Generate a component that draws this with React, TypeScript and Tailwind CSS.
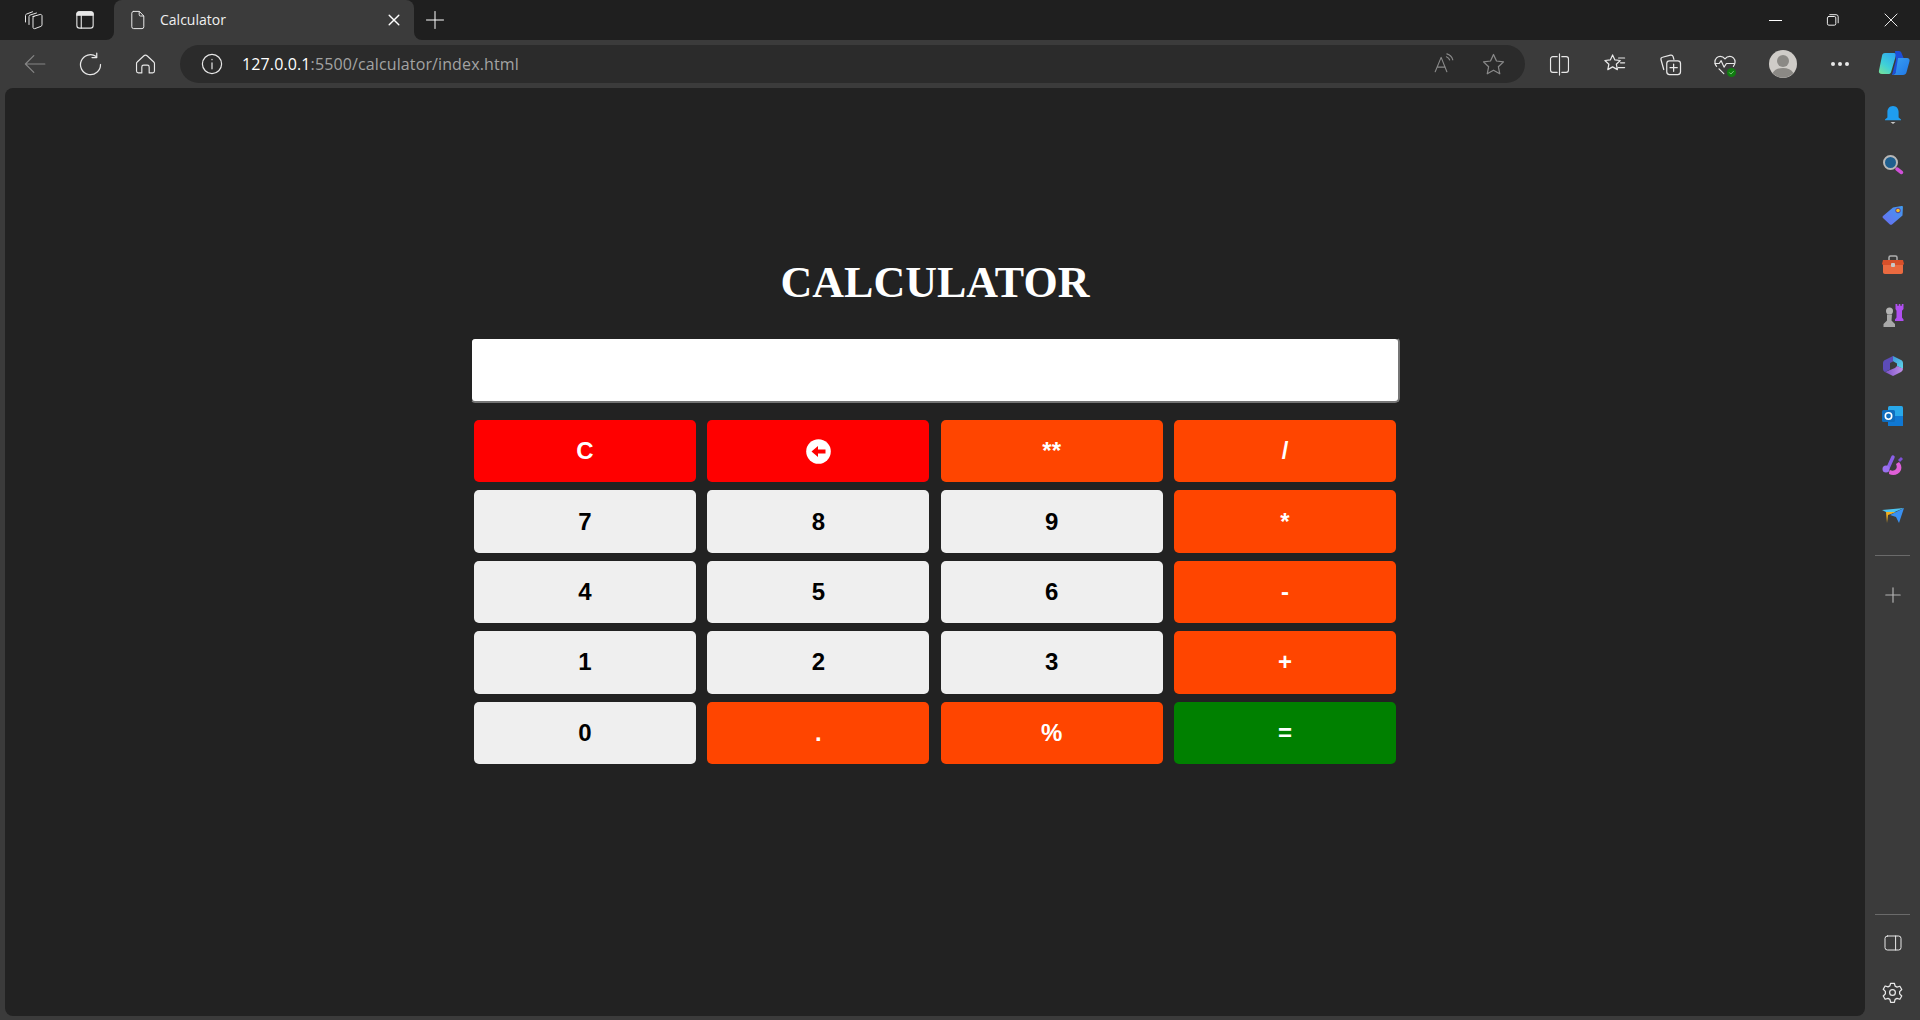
import { ReactNode } from "react";

const BUTTONS = [
  { label: "C", tone: "bg-[#ff0000] text-white" },
  { label: "back", tone: "bg-[#ff0000] text-white" },
  { label: "**", tone: "bg-[#ff4500] text-white" },
  { label: "/", tone: "bg-[#ff4500] text-white" },
  { label: "7", tone: "bg-[#efefef] text-black" },
  { label: "8", tone: "bg-[#efefef] text-black" },
  { label: "9", tone: "bg-[#efefef] text-black" },
  { label: "*", tone: "bg-[#ff4500] text-white" },
  { label: "4", tone: "bg-[#efefef] text-black" },
  { label: "5", tone: "bg-[#efefef] text-black" },
  { label: "6", tone: "bg-[#efefef] text-black" },
  { label: "-", tone: "bg-[#ff4500] text-white" },
  { label: "1", tone: "bg-[#efefef] text-black" },
  { label: "2", tone: "bg-[#efefef] text-black" },
  { label: "3", tone: "bg-[#efefef] text-black" },
  { label: "+", tone: "bg-[#ff4500] text-white" },
  { label: "0", tone: "bg-[#efefef] text-black" },
  { label: ".", tone: "bg-[#ff4500] text-white" },
  { label: "%", tone: "bg-[#ff4500] text-white" },
  { label: "=", tone: "bg-[#008000] text-white" },
];

function Icon({
  size = 20,
  className = "text-[#e8e8e8]",
  children,
}: {
  size?: number;
  className?: string;
  children: ReactNode;
}) {
  return (
    <svg
      width={size}
      height={size}
      viewBox="0 0 20 20"
      fill="none"
      stroke="currentColor"
      strokeWidth={1}
      strokeLinecap="round"
      strokeLinejoin="round"
      className={className}
    >
      {children}
    </svg>
  );
}

function ToolSlot({
  width = "w-[55px]",
  children,
}: {
  width?: string;
  children: ReactNode;
}) {
  return (
    <div className={`flex h-full shrink-0 items-center justify-center ${width}`}>
      {children}
    </div>
  );
}

function SideSlot({ children }: { children: ReactNode }) {
  return (
    <div className="flex h-[50.1px] w-full shrink-0 items-center justify-center">
      {children}
    </div>
  );
}

function TitleBar() {
  return (
    <div className="flex h-10 shrink-0 bg-[#3b3b3b]">
      <div className="flex w-[114px] shrink-0 items-center rounded-br-lg bg-[#1f1f1f] pl-[23px]">
        <Icon size={20}>
          <path d="M10 6.500l7-2c1-.3 2 .3 2 1.300v9c0 .8-.4 1.300-1.100 1.600l-6 2.200c-1 .3-1.900-.2-1.900-1.200V8c0-.7.3-1.200 1-1.500Z" />
          <path d="M6 14.500V6.500c0-.7.4-1.200 1-1.400l6.500-2.100" />
          <path d="M2.500 12V5.500c0-.7.4-1.200 1-1.400l6-2.300" />
        </Icon>
        <div className="ml-[31px]">
          <Icon size={22}>
            <rect x="2.600" y="2.600" width="14.800" height="14.800" rx="2.400" />
            <path d="M2.600 5.600h14.800v-1a2 2 0 0 0-2-2H4.600a2 2 0 0 0-2 2Z" fill="currentColor" />
            <path d="M6.600 6v11.400" />
          </Icon>
        </div>
      </div>
      <div className="w-[300px] shrink-0 bg-[#1f1f1f]">
        <div className="flex h-full items-center rounded-t-lg bg-[#3b3b3b] pl-[14px] pr-[12px]">
          <Icon size={20}>
            <path d="M5.600 1.400h5.800l4.400 4.600v10.800a1.800 1.800 0 0 1-1.800 1.800H5.600a1.800 1.800 0 0 1-1.800-1.800V3.200a1.800 1.800 0 0 1 1.800-1.800Z" />
            <path d="M11.200 1.600v3.200a1.200 1.200 0 0 0 1.200 1.200h3.200" />
          </Icon>
          <span className="ml-[12px] flex-1 pb-[2px] font-['Open_Sans',sans-serif] text-[14px] text-[#f0f0f0]">
            Calculator
          </span>
          <Icon size={16} className="text-white">
            <path d="M4 4l12 12M16 4 4 16" strokeWidth={1.800} />
          </Icon>
        </div>
      </div>
      <div className="flex flex-1 items-center rounded-bl-lg bg-[#1f1f1f] pl-[11px]">
        <Icon size={20} className="text-white">
          <path d="M10 1.500v17M1.500 10h17" />
        </Icon>
        <div className="ml-auto flex h-full items-center">
          <div className="flex w-[57px] justify-center">
            <div className="h-px w-[13px] bg-white" />
          </div>
          <div className="flex w-[58px] justify-center">
            <Icon size={14} className="text-white">
              <rect x="2" y="5" width="12" height="12.400" rx="2" strokeWidth={1.300} />
              <path d="M5.400 2.400h9a3 3 0 0 1 3 3v8.600" strokeWidth={1.300} />
            </Icon>
          </div>
          <div className="flex w-[58px] justify-center">
            <Icon size={14} className="text-white">
              <path d="M1.400 1.400l17.200 17.200M18.600 1.400 1.400 18.600" strokeWidth={1.300} />
            </Icon>
          </div>
        </div>
      </div>
    </div>
  );
}

function Toolbar() {
  return (
    <div className="flex h-12 shrink-0 items-center bg-[#3b3b3b] pl-[7px]">
      <ToolSlot width="w-[56px]">
        <Icon size={24} className="text-[#858585]">
          <path d="M18.200 10H2.200M9 3 2 10l7 7" />
        </Icon>
      </ToolSlot>
      <ToolSlot>
        <Icon size={25}>
          <path d="M14.600 3.600A8 8 0 1 0 18 10" />
          <path d="M15 .8v3.600h-3.800" />
        </Icon>
      </ToolSlot>
      <ToolSlot>
        <Icon size={23}>
          <path d="M8.400 2.600a2.300 2.300 0 0 1 3.200 0l5.600 5.200c.4.4.6.8.6 1.300v6.600c0 .9-.7 1.600-1.600 1.600h-3v-5.100a1.600 1.600 0 0 0-1.600-1.600H8.400a1.600 1.600 0 0 0-1.600 1.600v5.100h-3c-.9 0-1.600-.7-1.600-1.600V9.100c0-.5.2-1 .6-1.300Z" />
        </Icon>
      </ToolSlot>
      <div className="ml-[7px] flex h-[38px] min-w-0 flex-1 items-center rounded-full bg-[#2b2b2b] pl-[20px] pr-[19px]">
        <Icon size={24}>
          <circle cx="10" cy="10" r="8" />
          <path d="M10 9v5M10 6.200v.2" />
        </Icon>
        <div className="ml-[18px] font-['Open_Sans',sans-serif] text-[16px] tracking-[0.12px] text-[#a3a3a3]">
          <span className="text-white">127.0.0.1</span>:5500/calculator/index.html
        </div>
        <div className="ml-auto flex items-center gap-[26px]">
          <Icon size={22} className="text-[#8a8a8a]">
            <path d="M2 17 7.400 4 12.600 17M3.800 12.800h7.400" />
            <path d="M12.200 3.400a5 5 0 0 1 3 3M12.600.8a8 8 0 0 1 5.400 5.400" />
          </Icon>
          <Icon size={25} className="text-[#8a8a8a]">
            <path d="m10 2 2.400 5.200 5.600.7-4.100 3.900 1.100 5.600-5-2.800-5 2.800 1.100-5.600L2 7.900l5.600-.7Z" />
          </Icon>
        </div>
      </div>
      <div className="ml-[7px] flex h-full shrink-0 items-center">
        <ToolSlot>
          <Icon size={23}>
            <path d="M8 3.200H4.200a2 2 0 0 0-2 2v9.600a2 2 0 0 0 2 2H8M12 3.200h3.800a2 2 0 0 1 2 2v9.600a2 2 0 0 1-2 2H12M10 .8v18.400" />
          </Icon>
        </ToolSlot>
        <ToolSlot width="w-[56px]">
          <Icon size={24}>
            <path d="m8 2.400 1.900 4.200 4.500.5-3.300 3.100.9 4.500-4-2.300-4 2.300.9-4.500L1.600 7.100l4.500-.5Z" />
            <path d="M13 5h5M14.600 9h3.400M12.600 13h5.400" />
          </Icon>
        </ToolSlot>
        <ToolSlot width="w-[54px]">
          <Icon size={25}>
            <rect x="7" y="7" width="11" height="11" rx="2.200" />
            <path d="M12.500 9.600v5.800M9.600 12.500h5.800" />
            <path d="M4.600 14 2.400 6.200c-.2-1 .3-1.800 1.200-2l6.400-1.700c1-.2 1.800.2 2.100 1.200l.6 2.200" />
          </Icon>
        </ToolSlot>
        <ToolSlot width="w-[56px]">
          <div className="relative">
            <Icon size={24}>
              <path d="M3 12a5.400 5.400 0 0 1-1.400-3.600C1.600 5.600 3.800 3.600 6 3.600c1.600 0 3 .8 4 2.200 1-1.400 2.400-2.200 4-2.200 2.200 0 4.400 2 4.400 4.800 0 1.300-.5 2.500-1.400 3.600" />
              <path d="M1.600 9.600h3.600l1.600-2.400 2.400 5.400 2-3h6.600M5 14l4 4" />
            </Icon>
            <div className="absolute bottom-[-1px] right-[1px] flex h-[9px] w-[9px] items-center justify-center rounded-full bg-[#107c10]">
              <svg width="7" height="7" viewBox="0 0 8 8" fill="none" stroke="#8fcf8f" strokeWidth="1">
                <path d="m1.500 4 1.800 1.800 3.200-3.400" />
              </svg>
            </div>
          </div>
        </ToolSlot>
        <ToolSlot width="w-[60px]">
          <svg width="28" height="28" viewBox="0 0 28 28">
            <circle cx="14" cy="14" r="14" fill="#cfccc8" />
            <circle cx="14" cy="11" r="6" fill="#8b8985" />
            <path d="M3.600 23c2-3.400 5.600-5 10.400-5s8.400 1.600 10.400 5a14 14 0 0 1-20.800 0Z" fill="#8b8985" />
          </svg>
        </ToolSlot>
        <ToolSlot width="w-[54px]">
          <div className="flex gap-[3px]">
            <div className="h-[4px] w-[4px] rounded-full bg-[#e8e8e8]" />
            <div className="h-[4px] w-[4px] rounded-full bg-[#e8e8e8]" />
            <div className="h-[4px] w-[4px] rounded-full bg-[#e8e8e8]" />
          </div>
        </ToolSlot>
        <ToolSlot width="w-[53px]">
          <svg width="32" height="28" viewBox="0 0 32 28">
            <defs>
              <linearGradient id="cpa" x1="0.800" y1="0" x2="0.200" y2="1">
                <stop offset="0" stopColor="#2fa8f0" />
                <stop offset="0.600" stopColor="#3fd0d8" />
                <stop offset="1" stopColor="#70e0a0" />
              </linearGradient>
              <linearGradient id="cpb" x1="0" y1="0" x2="1" y2="1">
                <stop offset="0" stopColor="#3aa0f0" />
                <stop offset="1" stopColor="#2078e8" />
              </linearGradient>
            </defs>
            <path d="M7 3h9c1.500 0 2.400.8 2 2.200l-5 17c-.4 1.200-1.200 1.800-2.600 1.800H4c-2.400 0-3.600-1.500-3-3.500L4.200 5C4.600 3.700 5.600 3 7 3Z" fill="url(#cpa)" />
            <path d="M17 1h4c1.200 0 2 .7 2.400 1.800L26 9l-8 13c-.8 1.500-2 3-4 3l4-15Z" fill="#1d4ed8" />
            <path d="M20 8h9c2 0 3 1.400 2.500 3.200l-3 11c-.5 1.800-1.700 2.800-3.500 2.800H14c2 0 3.200-1 3.800-2.800Z" fill="url(#cpb)" />
          </svg>
        </ToolSlot>
      </div>
    </div>
  );
}

function Sidebar() {
  return (
    <aside className="flex w-[55px] shrink-0 flex-col items-center bg-[#3b3b3b] pb-[2px] pt-[2px]">
      <SideSlot>
        <svg width="20" height="20" viewBox="0 0 20 20">
          <path d="M10 1c3.600 0 5.600 2.800 5.600 6v5.400l2.400 2.200v.6H2v-.6l2.400-2.200V7c0-3.200 2-6 5.600-6Z" fill="#1f9df0" />
          <path d="M7.500 17h5L10 19Z" fill="#c8c8c8" />
        </svg>
      </SideSlot>
      <SideSlot>
        <svg width="22" height="22" viewBox="0 0 22 22">
          <circle cx="8.500" cy="8.500" r="6.500" fill="#1f5f8f" stroke="#b8b8b8" strokeWidth="2" />
          <path d="m15 15 4.500 3.500" stroke="#d050d8" strokeWidth="3.500" strokeLinecap="round" />
        </svg>
      </SideSlot>
      <SideSlot>
        <svg width="22" height="20" viewBox="0 0 22 20">
          <defs>
            <linearGradient id="tag" x1="1" y1="0" x2="0" y2="1">
              <stop offset="0" stopColor="#3f9cf0" />
              <stop offset="1" stopColor="#6a6cf0" />
            </linearGradient>
          </defs>
          <path d="M1 11 11 2.500l8.500-1.500c1-.1 1.500.4 1.400 1.400l-.4 8L10 19.500c-.8.500-1.500.500-2.100-.1L1 13c-.6-.6-.6-1.400 0-2Z" fill="url(#tag)" />
          <circle cx="16" cy="5.500" r="2.300" fill="#f0c020" stroke="#5a3a90" strokeWidth="1" />
        </svg>
      </SideSlot>
      <SideSlot>
        <svg width="24" height="20" viewBox="0 0 24 20">
          <path d="M8 5V2.500C8 1.500 8.700 1 9.500 1h5c.8 0 1.500.5 1.500 1.500V5" fill="none" stroke="#b0b0b0" strokeWidth="1.500" />
          <path d="M2 5h20l1 4-1 1H2L1 9Z" fill="#d8502a" />
          <path d="M2 10h20v7c0 1-.7 2-2 2H4c-1.300 0-2-1-2-2Z" fill="#ea6a40" />
          <rect x="10" y="8" width="4" height="4" rx="1" fill="#c8c8c8" />
        </svg>
      </SideSlot>
      <SideSlot>
        <svg width="24" height="24" viewBox="0 0 24 24">
          <path d="M14.500 1h1.800v1.800h1.500V1h1.500v1.800h1.500V1h1.700v5l-1.500 1.800v6.700l1.500 2V18h-8.500v-1.500l1.500-2V7.800L14.500 6Z" fill="#b04ff0" />
          <circle cx="8.500" cy="8" r="3.500" fill="#b4b4b4" />
          <path d="M6 11.500h5l-.5 6 3.500 3.500v3H2.500v-3L6 17.500Z" fill="#a8a8a8" />
        </svg>
      </SideSlot>
      <SideSlot>
        <svg width="22" height="22" viewBox="0 0 22 22">
          <defs>
            <linearGradient id="m3a" x1="0" y1="0" x2="1" y2="1">
              <stop offset="0" stopColor="#3a8fd8" />
              <stop offset="1" stopColor="#5fd8e8" />
            </linearGradient>
            <linearGradient id="m3b" x1="0" y1="0" x2="1" y2="0">
              <stop offset="0" stopColor="#7a50c8" />
              <stop offset="1" stopColor="#c090e8" />
            </linearGradient>
          </defs>
          <path d="M11 1 19 5c1.300.7 2 1.800 2 3.200v5.600L15 11V8.500L9 5Z" fill="url(#m3a)" />
          <path d="M21 13.500c0 1.500-.7 2.700-2 3.400L11 21 3 17l10-4 2-2Z" fill="url(#m3b)" />
          <path d="M11 1 3 5C1.700 5.700 1 6.800 1 8.200v5.600C1 15.300 1.700 16.400 3 17l5-2.500V8l3-1.500Z" fill="#5c4cb8" />
        </svg>
      </SideSlot>
      <SideSlot>
        <svg width="22" height="22" viewBox="0 0 22 22">
          <rect x="6" y="1" width="15" height="20" rx="1.500" fill="#28a8ea" />
          <path d="M6 11h15v9c0 .6-.4 1-1 1H7c-.6 0-1-.4-1-1Z" fill="#0f78d4" />
          <rect x="0" y="5" width="13" height="12" rx="1.500" fill="#0f6cbd" />
          <circle cx="6.500" cy="11" r="3.200" fill="none" stroke="#fff" strokeWidth="1.600" />
        </svg>
      </SideSlot>
      <SideSlot>
        <svg width="22" height="24" viewBox="0 0 22 24">
          <path d="M11 3 6 14" stroke="#8a60e8" strokeWidth="3.500" strokeLinecap="round" />
          <circle cx="4" cy="15" r="3.500" fill="#9a70f0" />
          <path d="M7 20c4 2 10 1 12-4 1-3 0-6-2-8l-3 2c1 2 1 4 0 5-1.500 2-4 2-6 1-1 1-1 3-1 4Z" fill="#e060d8" />
          <path d="m16 6 3-3 2 2-3 3Z" fill="#8050d8" />
        </svg>
      </SideSlot>
      <SideSlot>
        <svg width="22" height="16" viewBox="0 0 22 16">
          <path d="M0 2 22 0 8 6Z" fill="#4cc4f0" />
          <path d="M4 4h10L6 7 5 15Z" fill="#f0b020" />
          <path d="M22 0 8 7l6 2 3 6Z" fill="#3a90f0" />
        </svg>
      </SideSlot>
      <div className="mt-[14px] h-px w-[35px] shrink-0 bg-[#6a6a6a]" />
      <div className="mt-[14px] flex h-[50px] w-full shrink-0 items-center justify-center">
        <Icon size={18} className="text-[#b4b4b4]">
          <path d="M10 2v16M2 10h16" strokeWidth={1.300} />
        </Icon>
      </div>
      <div className="mb-[3px] mt-auto h-px w-[35px] shrink-0 bg-[#6a6a6a]" />
      <div className="flex h-[50px] w-full shrink-0 items-center justify-center">
        <Icon size={20}>
          <rect x="2" y="3" width="16" height="14" rx="2.400" />
          <path d="M12.600 3v14" />
        </Icon>
      </div>
      <div className="flex h-[50px] w-full shrink-0 items-center justify-center">
        <Icon size={25}>
          <path d="M8.500 1.800h3l.6 2.300 1.500.8 2.300-.7 1.500 2.600-1.700 1.700v1.800l1.700 1.700-1.500 2.600-2.300-.7-1.500.8-.6 2.300h-3l-.6-2.300-1.500-.8-2.300.7-1.500-2.600 1.700-1.700V8.300L2.600 6.600l1.500-2.600 2.300.7 1.500-.8Z" />
          <circle cx="10" cy="9.200" r="2.300" />
        </Icon>
      </div>
    </aside>
  );
}

export default function App() {
  return (
    <div className="flex h-[1020px] w-[1920px] flex-col overflow-hidden bg-[#3b3b3b]">
      <TitleBar />
      <Toolbar />
      <div className="flex min-h-0 flex-1">
        <div className="mb-[4px] ml-[5px] flex min-w-0 flex-1 flex-col items-center rounded-lg bg-[#222222] pt-[170px]">
          <h1 className="font-['Liberation_Serif',serif] text-[44px] font-bold leading-[50px] text-white">
            CALCULATOR
          </h1>
          <div className="mt-[29px] h-[66px] w-[930px] rounded-[5px] border-2 border-b-[#767676] border-l-[#222222] border-r-[#767676] border-t-[#222222] bg-white" />
          <div className="mt-[17px] grid w-[922px] grid-cols-4 gap-x-[11.33px] gap-y-[8px]">
            {BUTTONS.map((button) => (
              <button
                key={button.label}
                className={`flex h-[62.4px] items-center justify-center rounded-[5px] font-['Liberation_Sans',sans-serif] text-2xl font-bold ${button.tone}`}
              >
                {button.label === "back" ? (
                  <svg width="25" height="25" viewBox="0 0 25 25">
                    <circle cx="12.500" cy="12.500" r="12.300" fill="#ffffff" />
                    <path d="M5.500 12.500 12 7v3.500h7.500v4H12V18Z" fill="#ff0000" />
                  </svg>
                ) : (
                  button.label
                )}
              </button>
            ))}
          </div>
        </div>
        <Sidebar />
      </div>
    </div>
  );
}
